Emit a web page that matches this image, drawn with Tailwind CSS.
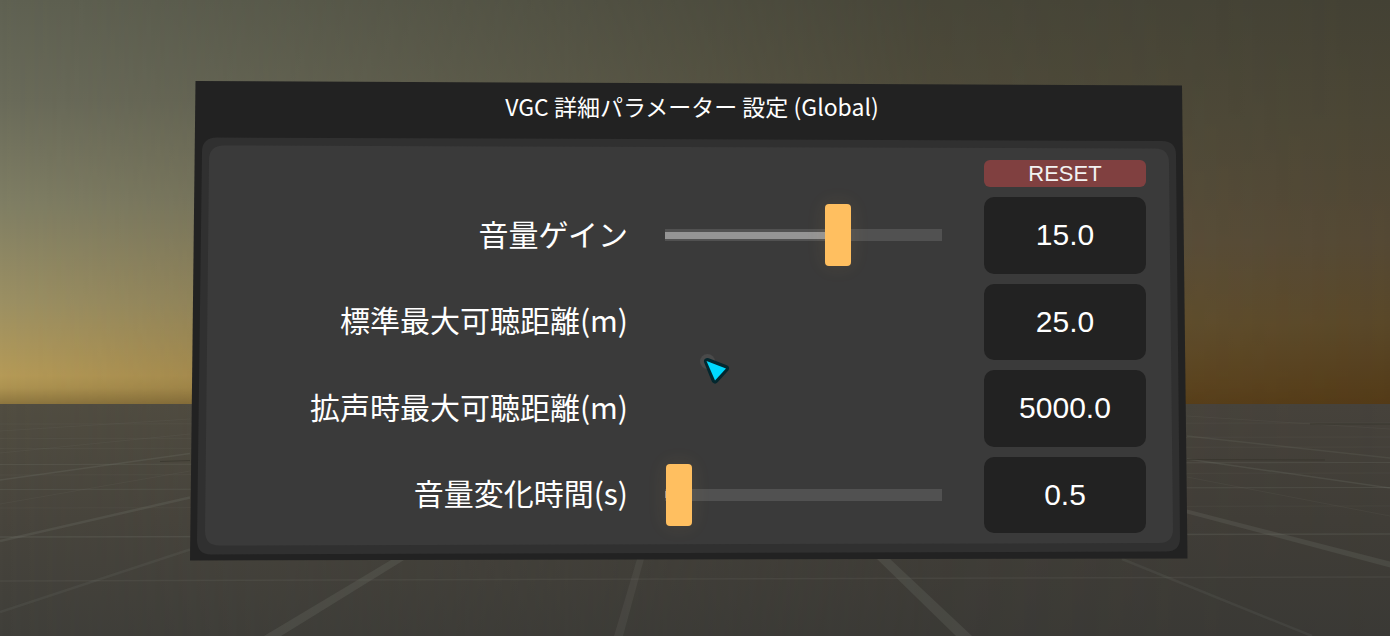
<!DOCTYPE html>
<html lang="ja">
<head>
<meta charset="utf-8">
<meta name="viewport" content="width=device-width, initial-scale=1">
<title>VGC 詳細パラメーター 設定 (Global)</title>
<script src="https://cdn.jsdelivr.net/npm/@tailwindcss/browser@4"></script>
</head>
<body class="relative isolate min-h-screen overflow-x-hidden bg-[#3e3d38] text-white font-['Noto_Sans_CJK_JP',sans-serif]">

<!-- World behind the panel: dusk sky and gridded floor -->
<svg class="absolute inset-0 -z-10 h-full w-full" viewBox="0 0 1390 636" preserveAspectRatio="none" aria-hidden="true">
  <defs>
    <linearGradient id="skyWest" x1="0" y1="0" x2="0" y2="1">
      <stop offset="0" stop-color="#5f6152"/>
      <stop offset=".25" stop-color="#6a6b5a"/>
      <stop offset=".5" stop-color="#7f7e64"/>
      <stop offset=".75" stop-color="#9c9063"/>
      <stop offset=".93" stop-color="#b59a57"/>
      <stop offset=".96" stop-color="#ad9351"/>
      <stop offset="1" stop-color="#8d763f"/>
    </linearGradient>
    <linearGradient id="skyEast" x1="0" y1="0" x2="0" y2="1">
      <stop offset="0" stop-color="#434134"/>
      <stop offset=".3" stop-color="#4b4635"/>
      <stop offset=".6" stop-color="#544834"/>
      <stop offset=".8" stop-color="#594728"/>
      <stop offset="1" stop-color="#533a17"/>
    </linearGradient>
    <linearGradient id="floorWest" x1="0" y1="0" x2="0" y2="1">
      <stop offset="0" stop-color="#514d41"/>
      <stop offset=".5" stop-color="#48453d"/>
      <stop offset="1" stop-color="#403f3a"/>
    </linearGradient>
    <linearGradient id="floorEast" x1="0" y1="0" x2="0" y2="1">
      <stop offset="0" stop-color="#46423b"/>
      <stop offset=".5" stop-color="#403d37"/>
      <stop offset="1" stop-color="#3a3935"/>
    </linearGradient>
    <linearGradient id="fade"><stop offset="0" stop-color="#fff" stop-opacity="0"/><stop offset=".33" stop-color="#fff" stop-opacity=".4"/><stop offset=".67" stop-color="#fff" stop-opacity=".85"/><stop offset="1" stop-color="#fff"/></linearGradient>
    <mask id="east"><rect width="1390" height="636" fill="url(#fade)"/></mask>
  </defs>
  <rect width="1390" height="404" fill="url(#skyWest)"/>
  <rect y="404" width="1390" height="232" fill="url(#floorWest)"/>
  <g mask="url(#east)">
    <rect width="1390" height="404" fill="url(#skyEast)"/>
    <rect y="404" width="1390" height="232" fill="url(#floorEast)"/>
  </g>
  <g fill="none" stroke="#7c8078" stroke-opacity=".2">
    <path stroke-opacity=".1" d="M0 424L1390 423M0 438.500L1390 437M0 448.500L1390 447M0 475L1390 473M0 508L1390 506"/>
    <path d="M0 464.500L1390 462.500M0 489.500L1390 487.500"/>
    <path stroke-width="1.500" d="M0 537L1390 534"/>
    <path stroke-opacity=".14" stroke-width="1.500" d="M0 581L1390 577"/>
    <path stroke-width="1.500" d="M0 480L190 453.500M1187 459L1390 488"/>
    <path stroke-opacity=".1" d="M0 504L190 471M0 453L190 434M0 431L190 419M1187 477L1390 516M1187 416L1390 429"/>
    <path stroke-width="1.500" stroke-opacity=".16" d="M1187 436L1390 458"/>
    <path stroke-width="2.500" d="M0 541L190 497.500"/>
    <path stroke-width="2.500" stroke-opacity=".13" d="M0 612L190 549.500M1122 559L1312 636"/>
  </g>
  <g fill="#7c8078" fill-opacity=".2">
    <path d="M391 560L404 560L281 636L264 636Z"/>
    <path d="M637 559L644 559L623 636L614 636Z" fill-opacity=".14"/>
    <path d="M876 558L889 558L972 636L956 636Z"/>
    <path d="M1187 509.500L1390 561.500V567.500L1187 513.500Z"/>
  </g>
  <g fill="none" stroke="#34322a" stroke-opacity=".6">
    <path d="M160 461.500L190 460.500M1187 459.500L1325 460M1310 424L1390 424"/>
  </g>
</svg>

<main class="pt-[81px] pr-[202px] pb-[75px] pl-[190px]">
  <form class="relative isolate pr-[42px] pb-[28px]">

    <!-- Panel plates, seen slightly in perspective -->
    <svg class="absolute inset-0 -z-10 h-full w-full" viewBox="0 0 998 480" preserveAspectRatio="none" aria-hidden="true">
      <path d="M5.500 0L992 4.500L997.500 477.500L0 479.500Z" fill="#222222"/>
      <path d="M27 56.500L972 60Q986 60 986 74L990 457Q990 470.500 976 470.500L21 473.500Q7 473.500 7 459L12 71Q12 56.500 27 56.500Z" fill="#303030"/>
      <path d="M34 64.500L965 67.500Q979 67.500 979 82L983 448Q983 462 969 462L29 464.500Q15 464.500 15 450L19 79Q19 64.500 34 64.500Z" fill="#3a3a3a"/>
    </svg>

    <h1 class="pt-[9px] pl-[48px] text-center text-[23px] leading-[32px] font-normal">VGC 詳細パラメーター 設定 (Global)</h1>

    <div class="mt-[38px] flex justify-end">
      <button type="reset" class="h-[27px] w-[162px] rounded-md bg-[#804040] font-['Liberation_Sans',sans-serif] text-[22px] leading-[27px] text-[#f2f2f2]">RESET</button>
    </div>

    <div class="mt-[10px] grid h-[336px] grid-rows-4 gap-[10px]">
      <div class="flex items-center">
        <label for="gain" class="flex-1 pr-[37px] pb-[5px] text-right text-[30px] leading-[44px]">音量ゲイン</label>
        <input type="range" aria-label="音量ゲイン" min="0" max="23.5" step="0.5" value="15" class="mr-[42px] h-[62px] w-[277px] appearance-none bg-[linear-gradient(#949494,#949494),linear-gradient(#515151,#515151)] bg-[length:62%_7px,100%_12px] bg-[position:left_center,left_center] bg-no-repeat [&::-webkit-slider-thumb]:h-[62px] [&::-webkit-slider-thumb]:w-[26px] [&::-webkit-slider-thumb]:appearance-none [&::-webkit-slider-thumb]:rounded-[4px] [&::-webkit-slider-thumb]:bg-[#ffbf60] [&::-webkit-slider-thumb]:shadow-[0_0_20px_#ffbf6018]">
        <input id="gain" type="text" value="15.0" class="h-full w-[162px] rounded-[10px] bg-[#222222] text-center font-['Liberation_Sans',sans-serif] text-[30px]">
      </div>
      <div class="flex items-center">
        <label for="range" class="flex-1 pr-[356px] pb-[5px] text-right text-[30px] leading-[44px] whitespace-nowrap">標準最大可聴距離(m)</label>
        <input id="range" type="text" value="25.0" class="h-full w-[162px] rounded-[10px] bg-[#222222] text-center font-['Liberation_Sans',sans-serif] text-[30px]">
      </div>
      <div class="flex items-center">
        <label for="loud" class="flex-1 pr-[356px] pb-[5px] text-right text-[30px] leading-[44px] whitespace-nowrap">拡声時最大可聴距離(m)</label>
        <input id="loud" type="text" value="5000.0" class="h-full w-[162px] rounded-[10px] bg-[#222222] text-center font-['Liberation_Sans',sans-serif] text-[30px]">
      </div>
      <div class="flex items-center">
        <label for="time" class="flex-1 pr-[37px] pb-[5px] text-right text-[30px] leading-[44px]">音量変化時間(s)</label>
        <input type="range" aria-label="音量変化時間(s)" min="0" max="100" step="0.1" value="0.5" class="mr-[42px] h-[62px] w-[277px] appearance-none bg-[linear-gradient(#949494,#949494),linear-gradient(#515151,#515151)] bg-[length:1%_7px,100%_12px] bg-[position:left_center,left_center] bg-no-repeat [&::-webkit-slider-thumb]:h-[62px] [&::-webkit-slider-thumb]:w-[26px] [&::-webkit-slider-thumb]:appearance-none [&::-webkit-slider-thumb]:rounded-[4px] [&::-webkit-slider-thumb]:bg-[#ffbf60] [&::-webkit-slider-thumb]:shadow-[0_0_20px_#ffbf6018]">
        <input id="time" type="text" value="0.5" class="h-full w-[162px] rounded-[10px] bg-[#222222] text-center font-['Liberation_Sans',sans-serif] text-[30px]">
      </div>
    </div>

    <!-- Pointer -->
    <svg class="pointer-events-none absolute top-[269px] left-[506px] h-[36px] w-[36px]" viewBox="0 0 36 36" aria-hidden="true">
      <circle cx="11.500" cy="11.500" r="7.500" fill="#4a4a4a"/>
      <path d="M11.500 11.500L29.500 18.500L19 30Z" fill="#03272e" stroke="#03272e" stroke-width="7" stroke-linejoin="round"/>
      <path d="M10.500 11L30 18.500L19 30.500Z" fill="#00d9ff"/>
    </svg>
  </form>
</main>
</body>
</html>
